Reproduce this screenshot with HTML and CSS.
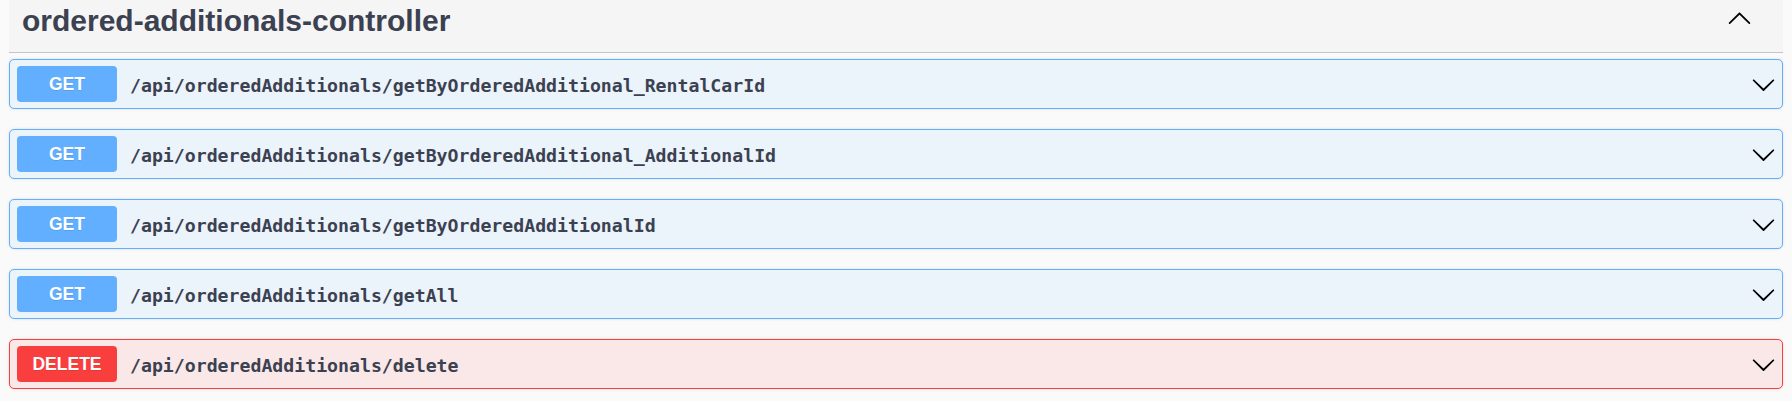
FILE: index.html
```html
<!DOCTYPE html>
<html>
<head>
<meta charset="utf-8">
<link rel="stylesheet" href="styles.css">
</head>
<body>
<div class="section">
  <div class="tag">
    <h3 class="tag-title">ordered-additionals-controller</h3>
    <svg class="tag-arrow" viewBox="0 0 20 20" width="25" height="25"><path d="M17.418 14.908c.272.268.709.268.979 0s.271-.701 0-.969l-7.908-7.830c-.27-.268-.707-.268-.979 0l-7.908 7.83c-.27.268-.27.701 0 .969.271.268.709.268.979 0L10 7.767l7.418 7.141z"/></svg>
  </div>
  <div class="ops">
    <div class="op get">
      <span class="method">GET</span>
      <span class="path">/api/orderedAdditionals/getByOrderedAdditional_RentalCarId</span>
      <svg class="arrow" viewBox="0 0 20 20" width="25" height="25"><path d="M17.418 6.109c.272-.268.709-.268.979 0s.271.701 0 .969l-7.908 7.83c-.27.268-.707.268-.979 0l-7.908-7.83c-.27-.268-.27-.701 0-.969.271-.268.709-.268.979 0L10 13.25l7.418-7.141z"/></svg>
    </div>
    <div class="op get">
      <span class="method">GET</span>
      <span class="path">/api/orderedAdditionals/getByOrderedAdditional_AdditionalId</span>
      <svg class="arrow" viewBox="0 0 20 20" width="25" height="25"><path d="M17.418 6.109c.272-.268.709-.268.979 0s.271.701 0 .969l-7.908 7.83c-.27.268-.707.268-.979 0l-7.908-7.83c-.27-.268-.27-.701 0-.969.271-.268.709-.268.979 0L10 13.25l7.418-7.141z"/></svg>
    </div>
    <div class="op get">
      <span class="method">GET</span>
      <span class="path">/api/orderedAdditionals/getByOrderedAdditionalId</span>
      <svg class="arrow" viewBox="0 0 20 20" width="25" height="25"><path d="M17.418 6.109c.272-.268.709-.268.979 0s.271.701 0 .969l-7.908 7.83c-.27.268-.707.268-.979 0l-7.908-7.83c-.27-.268-.27-.701 0-.969.271-.268.709-.268.979 0L10 13.25l7.418-7.141z"/></svg>
    </div>
    <div class="op get">
      <span class="method">GET</span>
      <span class="path">/api/orderedAdditionals/getAll</span>
      <svg class="arrow" viewBox="0 0 20 20" width="25" height="25"><path d="M17.418 6.109c.272-.268.709-.268.979 0s.271.701 0 .969l-7.908 7.83c-.27.268-.707.268-.979 0l-7.908-7.83c-.27-.268-.27-.701 0-.969.271-.268.709-.268.979 0L10 13.25l7.418-7.141z"/></svg>
    </div>
    <div class="op delete">
      <span class="method">DELETE</span>
      <span class="path">/api/orderedAdditionals/delete</span>
      <svg class="arrow" viewBox="0 0 20 20" width="25" height="25"><path d="M17.418 6.109c.272-.268.709-.268.979 0s.271.701 0 .969l-7.908 7.83c-.27.268-.707.268-.979 0l-7.908-7.83c-.27-.268-.27-.701 0-.969.271-.268.709-.268.979 0L10 13.25l7.418-7.141z"/></svg>
    </div>
  </div>
</div>
</body>
</html>
```
FILE: styles.css
```css
html, body {
  margin: 0;
  padding: 0;
  background: #fafafa;
}
body {
  padding: 0 9px;
  font-family: "Liberation Sans", Arial, sans-serif;
  color: #3b4151;
}
.tag {
  display: flex;
  justify-content: space-between;
  align-items: flex-start;
  height: 52px;
  background: #f5f5f5;
  border-bottom: 1px solid #c4c6cb;
  box-sizing: content-box;
}
.tag-title {
  margin: 0;
  padding: 4px 0 0 13px;
  font-size: 30px;
  line-height: 34px;
  font-weight: 700;
  color: #3b4151;
}
.tag-arrow {
  margin: 5px 31px 0 0;
  fill: #000;
}
.ops {
  padding-top: 6px;
}
.op {
  display: flex;
  align-items: center;
  height: 50px;
  box-sizing: border-box;
  padding: 0 6px 0 7px;
  margin-bottom: 20px;
  border: 1px solid;
  border-radius: 5px;
  box-shadow: 0 0 3px rgba(0, 0, 0, 0.12);
}
.op.get {
  background: #ebf3fb;
  border-color: #61affe;
}
.op.delete {
  background: #fae7e7;
  border-color: #f93e3e;
}
.method {
  width: 100px;
  height: 36px;
  line-height: 36px;
  text-align: center;
  border-radius: 4px;
  color: #fff;
  font-weight: 700;
  font-size: 17.5px;
  text-shadow: 0 1px 0 rgba(0, 0, 0, 0.1);
  flex-shrink: 0;
}
.get .method {
  background: #61affe;
}
.delete .method {
  background: #f93e3e;
}
.path {
  flex: 1;
  padding-left: 13px;
  font-family: "DejaVu Sans Mono", "Liberation Mono", monospace;
  font-weight: 700;
  font-size: 18.2px;
  color: #3b4151;
  position: relative;
  top: 1px;
}
.arrow {
  flex-shrink: 0;
  fill: #000;
}
```
